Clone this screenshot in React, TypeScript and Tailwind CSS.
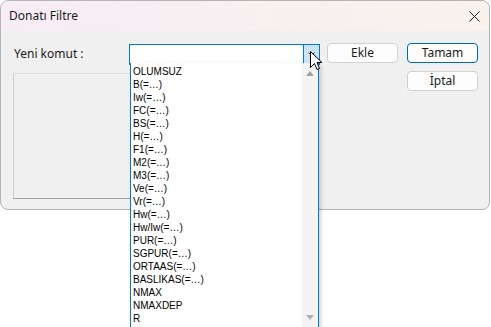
const items = [
  "OLUMSUZ",
  "B(=…)",
  "Iw(=…)",
  "FC(=…)",
  "BS(=…)",
  "H(=…)",
  "F1(=…)",
  "M2(=…)",
  "M3(=…)",
  "Ve(=…)",
  "Vr(=…)",
  "Hw(=…)",
  "Hw/Iw(=…)",
  "PUR(=…)",
  "SGPUR(=…)",
  "ORTAAS(=…)",
  "BASLIKAS(=…)",
  "NMAX",
  "NMAXDEP",
  "R",
];

const ui = "font-['Noto_Sans',sans-serif] text-[12px] text-[#1b1b1b]";

function DropdownList() {
  return (
    <div className="absolute left-0 top-full z-10 h-[264px] w-full border-x border-[#0078d7] bg-white shadow-[2px_2px_4px_rgba(0,0,0,0.18)]">
      <ul className="pt-[2px] pl-[2px] font-['Liberation_Sans',Arial,sans-serif] text-[10px] leading-[13px] text-black">
        {items.map((item) => (
          <li key={item} className="h-[13px] whitespace-nowrap">
            {item}
          </li>
        ))}
      </ul>
      <div className="absolute right-0 top-0 bottom-0 flex w-[16px] flex-col items-center justify-between bg-[#f4f4f4] pt-[8px] pb-[7px]">
        <svg width="8" height="5" viewBox="0 0 8 5">
          <path d="M0 5 L4 0 L8 5 Z" fill="#a3a3a3" />
        </svg>
        <svg width="8" height="5" viewBox="0 0 8 5">
          <path d="M0 0 L8 0 L4 5 Z" fill="#b4b4b4" />
        </svg>
      </div>
    </div>
  );
}

function Combo() {
  return (
    <div className="relative mt-[1px] flex h-[21px] w-[191px] border border-b-2 border-[#0078d7] bg-white">
      <div className="flex-1" />
      <div className="flex w-[16px] items-center justify-center border-l border-[#0078d7] bg-[#cce4f7]">
        <svg width="7" height="4" viewBox="0 0 7 4">
          <path d="M0.5 0.5 L3.5 3.5 L6.5 0.5" fill="none" stroke="#333" strokeWidth="1" />
        </svg>
      </div>
      <DropdownList />
    </div>
  );
}

function Btn({ label, primary }: { label: string; primary?: boolean }) {
  return (
    <button
      className={`flex h-[20px] w-[71px] items-center justify-center rounded-[4px] border bg-[#fdfdfd] ${ui} ${
        primary ? "border-[#0067c0]" : "border-[#d0d0d0]"
      }`}
    >
      {label}
    </button>
  );
}

export default function App() {
  return (
    <div className="h-[327px] w-[491px] overflow-hidden bg-white">
      <div className="relative h-[210px] w-[490px] rounded-[8px] border border-[#b4b4b4] bg-[#f0f0f0]">
        <div className="flex h-[30px] items-center justify-between rounded-t-[8px] bg-linear-to-r from-[#f6edf5] to-[#f9f2ed] pl-[8px] pr-[9px]">
          <span className={ui}>Donatı Filtre</span>
          <svg width="11" height="11" viewBox="0 0 11 11">
            <path d="M0.5 0.5 L10.5 10.5 M10.5 0.5 L0.5 10.5" stroke="#1b1b1b" strokeWidth="1" />
          </svg>
        </div>

        <div className="flex pl-[12px] pt-[12px]">
          <div className="flex flex-col">
            <div className="flex items-start">
              <span className={`w-[116px] pl-[1px] pt-[2px] ${ui}`}>Yeni komut :</span>
              <Combo />
            </div>
            <div className="mt-[8px] h-[126px] w-[305px] border-t border-l border-b border-t-[#e0e0e0] border-l-[#cfcfcf] border-b-[#a0a0a0]" />
          </div>
          <div className="ml-[7px]">
            <Btn label="Ekle" />
          </div>
          <div className="ml-[9px] flex flex-col gap-[8px]">
            <Btn label="Tamam" primary />
            <Btn label="İptal" />
          </div>
        </div>

        {/* mouse pointer */}
        <svg
          className="absolute left-[309px] top-[50px] z-20"
          width="13"
          height="21"
          viewBox="0 0 13 21"
        >
          <path
            d="M0.5 0.5 L0.5 16.5 L4.5 12.5 L7 18.5 L9.5 17.5 L7 11.5 L12 11.5 Z"
            fill="#fff"
            stroke="#000"
            strokeWidth="1"
            strokeLinejoin="round"
          />
        </svg>
      </div>
    </div>
  );
}
